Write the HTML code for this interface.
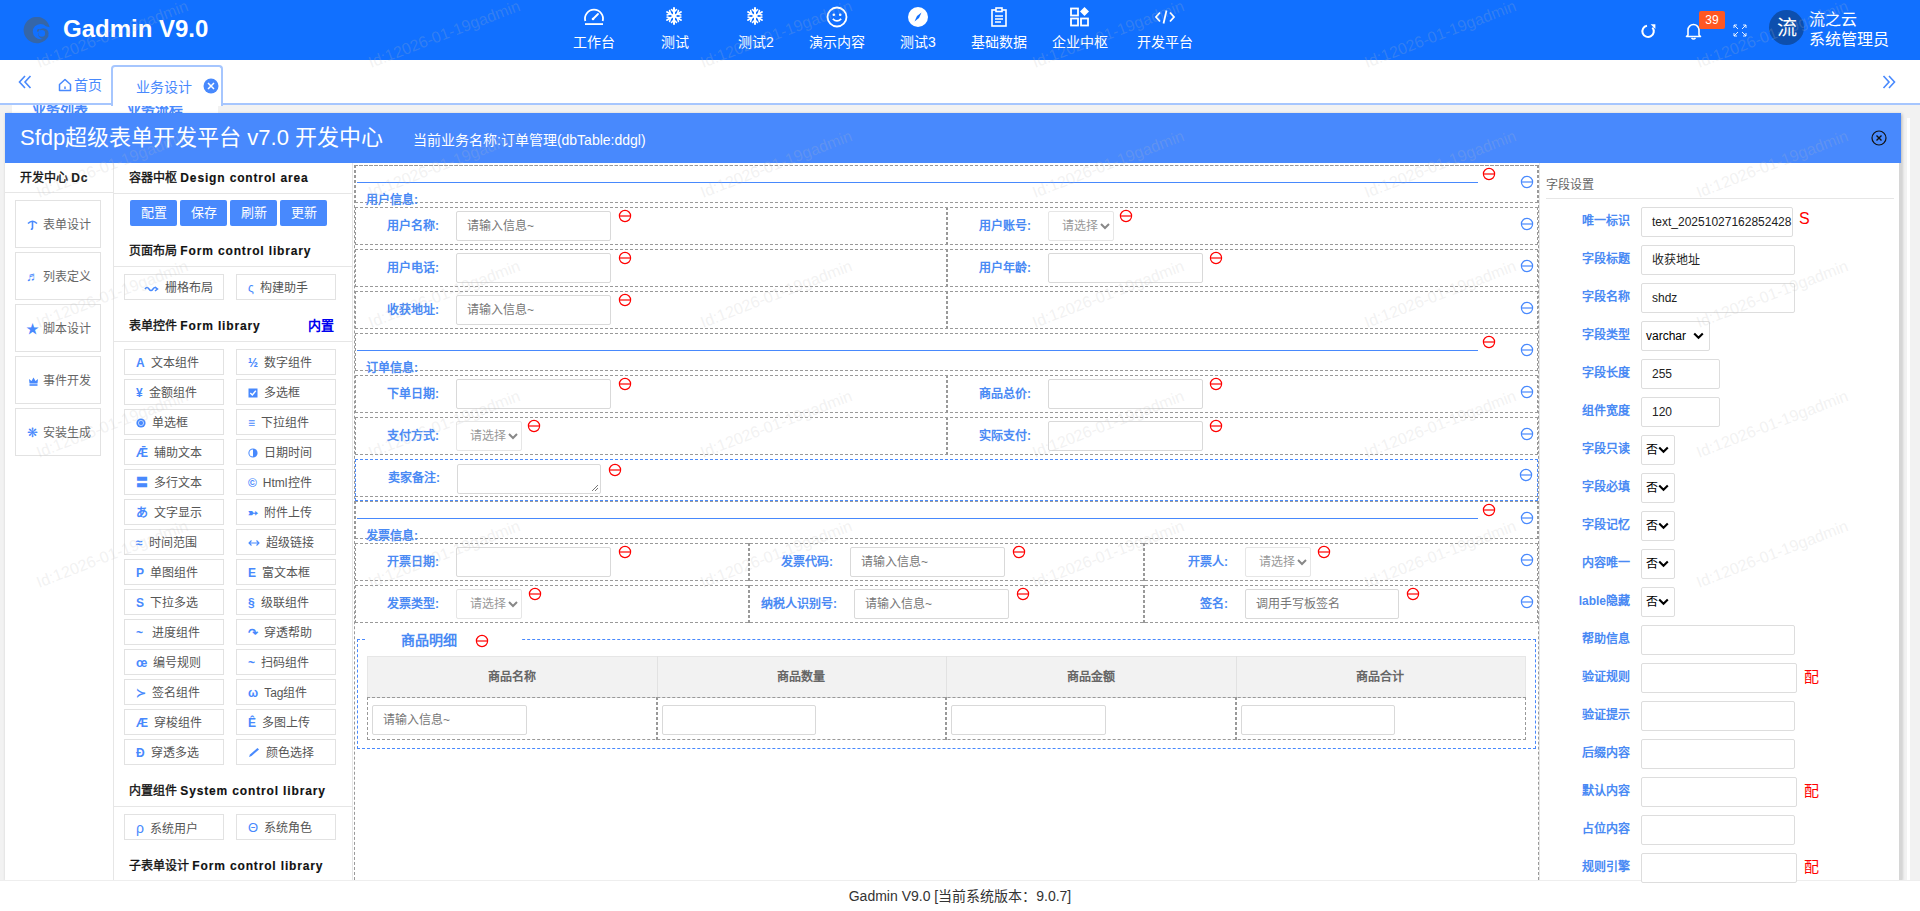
<!DOCTYPE html><html lang="zh-CN"><head><meta charset="utf-8"><title>Gadmin</title><style>
*{margin:0;padding:0;box-sizing:border-box}
html,body{width:1920px;height:911px;overflow:hidden}
body{position:relative;font-family:"Liberation Sans",sans-serif;background:#f2f2f2;color:#333}
.a{position:absolute}
.nw{white-space:nowrap}
.hdr{left:0;top:0;width:1920px;height:60px;background:#1170ff}
.nav{color:#fff;font-size:14px;text-align:center;width:80px}
.tabbar{left:0;top:60px;width:1920px;height:45px;background:#fff;border-bottom:2px solid #a6c6fe}
.modal{left:5px;top:113px;width:1896px;height:767px;background:#fff;box-shadow:1px 1px 3px rgba(0,0,0,.25)}
.mh{left:0;top:0;width:1896px;height:50px;background:#4889fd}
.foot{left:0;top:880px;width:1920px;height:31px;background:#fff;border-top:1px solid #eee}
.bx{border:1px solid #e2e2e2;background:#fff}
.ttl{font-size:12px;color:#111;-webkit-text-stroke:0.35px #111}
.en{font-weight:bold;letter-spacing:0.85px;-webkit-text-stroke:0.15px #111}
.btn{background:#4889fd;color:#fff;font-size:13px;text-align:center;border-radius:2px;line-height:26px;height:26px;width:47px}
.it{font-size:12px;color:#555;height:26px;line-height:26px;width:100px}
.ic{color:#4889fd;display:inline-block;text-align:center}
.dh{border:1px dashed #999}
.lb{font-size:12px;font-weight:bold;color:#4a8af4;text-align:right}
.inp{border:1px solid #d9d9d9;border-radius:2px;background:#fff;font-size:12px;color:#777;padding-left:10px;line-height:28px}
.sel{border:1px solid #e6e6e6;border-radius:2px;background:#fff;font-size:12px;color:#999;padding-left:13px;line-height:28px}
.rm{width:13px;height:13px}
.rl{font-size:12px;font-weight:bold;color:#4a8af4;text-align:right;width:80px}
.ri{border:1px solid #ddd;border-radius:2px;background:#fff;font-size:12px;color:#222;padding-left:10px;line-height:28px;height:30px}
.rs{border:1px solid #ddd;border-radius:2px;background:#fff;font-size:12px;color:#000;padding-left:4px;line-height:28px;height:30px}
</style></head><body>
<div class="a hdr"></div>
<svg class="a" style="left:22px;top:17px" width="30" height="30" viewBox="0 0 30 30"><path d="M27.7 10.2 A13.2 13.2 0 1 0 26.8 18.6 L24.4 19.55 A7.7 7.7 0 1 1 23.94 9.16 Z" fill="#3566a8"/><path fill-rule="evenodd" d="M26.6 16.6 A5.3 5.3 0 1 0 16 16.6 A5.3 5.3 0 1 0 26.6 16.6 Z M23.1 16.4 A3.3 3.3 0 1 0 16.5 16.4 A3.3 3.3 0 1 0 23.1 16.4 Z" fill="#3566a8"/><circle cx="16.6" cy="13.6" r="1.6" fill="#3566a8"/><path d="M16 16.6 A5.3 5.3 0 0 1 17.5 12.8 L19.5 14.5z" fill="#1170ff"/></svg>
<div class="a nw" style="left:63px;top:15px;font-size:24px;font-weight:bold;color:#fff;line-height:28px">Gadmin V9.0</div>
<div class="a" style="left:583px;top:6px;width:22px;height:22px;line-height:0"><svg width="22" height="20" viewBox="0 0 22 20"><path d="M2.3 15 A9 9 0 1 1 19.7 15" fill="none" stroke="#fff" stroke-width="1.8"/><rect x="2" y="17.2" width="18" height="1.8" fill="#fff"/><path d="M10 13 L15 8" stroke="#fff" stroke-width="1.8" stroke-linecap="round"/><circle cx="10" cy="13" r="1.3" fill="#fff"/></svg></div>
<div class="a nav nw" style="left:554px;top:33px;line-height:18px">工作台</div>
<div class="a" style="left:664px;top:6px;width:22px;height:22px;line-height:0"><svg width="20" height="20" viewBox="0 0 20 20"><g stroke="#fff" stroke-width="2" fill="none" stroke-linecap="round"><g transform="rotate(0 10 10)"><path d="M10 2 V18"/><path d="M7.5 3.5 L10 6 L12.5 3.5 M7.5 16.5 L10 14 L12.5 16.5" stroke-width="1.6"/></g><g transform="rotate(60 10 10)"><path d="M10 2 V18"/><path d="M7.5 3.5 L10 6 L12.5 3.5 M7.5 16.5 L10 14 L12.5 16.5" stroke-width="1.6"/></g><g transform="rotate(120 10 10)"><path d="M10 2 V18"/><path d="M7.5 3.5 L10 6 L12.5 3.5 M7.5 16.5 L10 14 L12.5 16.5" stroke-width="1.6"/></g></g></svg></div>
<div class="a nav nw" style="left:635px;top:33px;line-height:18px">测试</div>
<div class="a" style="left:745px;top:6px;width:22px;height:22px;line-height:0"><svg width="20" height="20" viewBox="0 0 20 20"><g stroke="#fff" stroke-width="2" fill="none" stroke-linecap="round"><g transform="rotate(0 10 10)"><path d="M10 2 V18"/><path d="M7.5 3.5 L10 6 L12.5 3.5 M7.5 16.5 L10 14 L12.5 16.5" stroke-width="1.6"/></g><g transform="rotate(60 10 10)"><path d="M10 2 V18"/><path d="M7.5 3.5 L10 6 L12.5 3.5 M7.5 16.5 L10 14 L12.5 16.5" stroke-width="1.6"/></g><g transform="rotate(120 10 10)"><path d="M10 2 V18"/><path d="M7.5 3.5 L10 6 L12.5 3.5 M7.5 16.5 L10 14 L12.5 16.5" stroke-width="1.6"/></g></g></svg></div>
<div class="a nav nw" style="left:716px;top:33px;line-height:18px">测试2</div>
<div class="a" style="left:826px;top:6px;width:22px;height:22px;line-height:0"><svg width="22" height="22" viewBox="0 0 22 22"><circle cx="11" cy="11" r="9.5" fill="none" stroke="#fff" stroke-width="1.8"/><circle cx="7.8" cy="8.8" r="1.3" fill="#fff"/><circle cx="14.2" cy="8.8" r="1.3" fill="#fff"/><path d="M6.8 12.8 Q11 17 15.2 12.8" fill="none" stroke="#fff" stroke-width="1.7"/></svg></div>
<div class="a nav nw" style="left:797px;top:33px;line-height:18px">演示内容</div>
<div class="a" style="left:907px;top:6px;width:22px;height:22px;line-height:0"><svg width="22" height="22" viewBox="0 0 22 22"><circle cx="11" cy="11" r="10" fill="#fff"/><path d="M14.5 6.5 L12 12 L7.5 15.5 L10 10z" fill="#1170ff"/></svg></div>
<div class="a nav nw" style="left:878px;top:33px;line-height:18px">测试3</div>
<div class="a" style="left:988px;top:6px;width:22px;height:22px;line-height:0"><svg width="22" height="22" viewBox="0 0 22 22"><g fill="none" stroke="#fff" stroke-width="1.6"><rect x="4" y="4" width="14" height="16"/><rect x="8" y="2" width="6" height="3.5" fill="#1170ff"/><path d="M7 10 H15 M7 13 H15 M7 16 H13"/></g></svg></div>
<div class="a nav nw" style="left:959px;top:33px;line-height:18px">基础数据</div>
<div class="a" style="left:1069px;top:6px;width:22px;height:22px;line-height:0"><svg width="22" height="22" viewBox="0 0 22 22"><g fill="none" stroke="#fff" stroke-width="1.8"><rect x="2" y="2.5" width="7" height="7"/><rect x="2" y="12.5" width="7" height="7"/><rect x="12" y="12.5" width="7" height="7"/></g><path d="M15.5 1 L20 5.5 L15.5 10 L11 5.5z" fill="#fff"/></svg></div>
<div class="a nav nw" style="left:1040px;top:33px;line-height:18px">企业中枢</div>
<div class="a" style="left:1154px;top:6px;width:22px;height:22px;line-height:0"><svg width="22" height="22" viewBox="0 0 22 22"><g fill="none" stroke="#fff" stroke-width="1.8"><path d="M6 6.5 L2 11 L6 15.5 M16 6.5 L20 11 L16 15.5 M12.5 4.5 L9.5 17.5"/></g></svg></div>
<div class="a nav nw" style="left:1125px;top:33px;line-height:18px">开发平台</div>
<svg class="a" style="left:1639px;top:21px" width="19" height="19" viewBox="0 0 19 19"><path d="M8 4.7 A5.7 5.7 0 1 0 13.4 6.6" fill="none" stroke="#fff" stroke-width="2"/><path d="M11.6 3.2 H16.4 V8 z" fill="#fff"/></svg>
<svg class="a" style="left:1685px;top:22px" width="17" height="18" viewBox="0 0 17 18"><path d="M3 13 V8 A5.5 5.5 0 0 1 14 8 V13 L15.5 14.5 H1.5z" fill="none" stroke="#fff" stroke-width="1.6" stroke-linejoin="round"/><path d="M6.5 16 Q8.5 18 10.5 16" fill="none" stroke="#fff" stroke-width="1.6"/></svg>
<div class="a nw" style="left:1699px;top:11px;width:26px;height:18px;background:#ff5722;border-radius:2px;color:#fff;font-size:12px;text-align:center;line-height:18px">39</div>
<svg class="a" style="left:1733px;top:24px" width="14" height="13" viewBox="0 0 14 13"><g fill="none" stroke="#fff" stroke-width="0.9"><path d="M1 4 V1 H4 M1 1 L5 5 M13 4 V1 H10 M13 1 L9 5 M1 9 V12 H4 M1 12 L5 8 M13 9 V12 H10 M13 12 L9 8"/></g></svg>
<div class="a" style="left:1769px;top:10px;width:35px;height:35px;border-radius:50%;background:#0d4fae;color:#fff;font-size:20px;text-align:center;line-height:37px">流</div>
<div class="a nw" style="left:1809px;top:10px;font-size:16px;color:#fff;line-height:19px">流之云</div>
<div class="a nw" style="left:1809px;top:30px;font-size:16px;color:#fff;line-height:19px">系统管理员</div>
<div class="a" style="left:12px;top:104px;width:206px;height:9px;background:#fff;overflow:hidden"><div class="a nw" style="left:20px;top:-4px;font-size:14px;font-weight:bold;color:#4889fd;line-height:18px">业务列表</div><div class="a nw" style="left:115px;top:-4px;font-size:14px;font-weight:bold;color:#4889fd;line-height:18px">业务流程</div></div>
<div class="a tabbar"></div>
<svg class="a" style="left:18px;top:75px" width="14" height="14" viewBox="0 0 14 14"><path d="M7 1 L1.5 7 L7 13 M12.5 1 L7 7 L12.5 13" fill="none" stroke="#4889fd" stroke-width="1.6"/></svg>
<svg class="a" style="left:58px;top:78px" width="14" height="14" viewBox="0 0 14 14"><path d="M1.5 6.5 L7 1.5 L12.5 6.5 V12.5 H1.5z" fill="none" stroke="#4889fd" stroke-width="1.5" stroke-linejoin="round"/><path d="M7 8.5 V11" stroke="#4889fd" stroke-width="1.5"/></svg>
<div class="a nw" style="left:74px;top:76px;font-size:14px;color:#4889fd;line-height:18px">首页</div>
<div class="a" style="left:111px;top:65px;width:112px;height:41px;background:#fff;border:2px solid #a6c6fe;border-bottom:none;border-radius:4px 4px 0 0"></div>
<div class="a nw" style="left:136px;top:78px;font-size:14px;color:#4889fd;line-height:18px">业务设计</div>
<svg class="a" style="left:203px;top:78px" width="16" height="16" viewBox="0 0 16 16"><circle cx="8" cy="8" r="7.5" fill="#4889fd"/><path d="M5 5 L11 11 M11 5 L5 11" stroke="#fff" stroke-width="1.5"/></svg>
<svg class="a" style="left:1882px;top:75px" width="14" height="14" viewBox="0 0 14 14"><path d="M1.5 1 L7 7 L1.5 13 M7 1 L12.5 7 L7 13" fill="none" stroke="#4889fd" stroke-width="1.6"/></svg>
<div class="a" style="left:1907px;top:118px;width:3px;height:762px;background:#fff"></div>
<div class="a modal">
<div class="a mh"></div>
<div class="a nw" style="left:15px;top:12px;font-size:22px;color:#fff;line-height:26px">Sfdp超级表单开发平台 v7.0 开发中心</div>
<div class="a nw" style="left:408px;top:18px;font-size:14px;color:#fff;line-height:18px;">当前业务名称:订单管理(dbTable:ddgl)</div>
<svg class="a" style="left:1866px;top:17px" width="16" height="16" viewBox="0 0 16 16"><circle cx="8" cy="8" r="7" fill="none" stroke="#111" stroke-width="1.2"/><path d="M5.5 5.5 L10.5 10.5 M10.5 5.5 L5.5 10.5" stroke="#111" stroke-width="1.4"/></svg>
</div>
<div class="a foot"></div>
<div class="a nw" style="left:0;top:887px;width:1920px;text-align:center;font-size:14px;color:#333;line-height:18px">Gadmin V9.0 [当前系统版本：9.0.7]</div>
<div class="a" style="left:113px;top:163px;width:1px;height:717px;background:#e6e6e6"></div>
<div class="a" style="left:5px;top:192px;width:108px;height:1px;background:#e6e6e6"></div>
<div class="a" style="left:113px;top:193px;width:240px;height:1px;background:#e6e6e6"></div>
<div class="a nw ttl" style="left:20px;top:170px;line-height:16px">开发中心 <span class="en">Dc</span></div>
<div class="a bx nw" style="left:15px;top:200px;width:86px;height:48px;font-size:12px;color:#666;line-height:48px;padding-left:10px"><span class="ic" style="width:13px;font-size:13px;margin-right:4px"><svg width="11" height="11" viewBox="0 0 11 11" style="vertical-align:-1px"><path d="M1 4.5 Q5.5 0 10 4.5" fill="none" stroke="#4889fd" stroke-width="1.6"/><path d="M5.5 2 V9 Q5.5 10.5 3.8 10" fill="none" stroke="#4889fd" stroke-width="1.6"/></svg></span>表单设计</div>
<div class="a bx nw" style="left:15px;top:252px;width:86px;height:48px;font-size:12px;color:#666;line-height:48px;padding-left:10px"><span class="ic" style="width:13px;font-size:13px;margin-right:4px">♬</span>列表定义</div>
<div class="a bx nw" style="left:15px;top:304px;width:86px;height:48px;font-size:12px;color:#666;line-height:48px;padding-left:10px"><span class="ic" style="width:13px;font-size:13px;margin-right:4px">★</span>脚本设计</div>
<div class="a bx nw" style="left:15px;top:356px;width:86px;height:48px;font-size:12px;color:#666;line-height:48px;padding-left:10px"><span class="ic" style="width:13px;font-size:13px;margin-right:4px"><svg width="11" height="10" viewBox="0 0 11 10" style="vertical-align:-1px;margin-left:2px"><path d="M1 3 L3.5 5 L5.5 1.5 L7.5 5 L10 3 L9.5 7.5 H1.5z" fill="#4889fd"/><rect x="1.5" y="8.2" width="8" height="1.6" fill="#4889fd"/></svg></span>事件开发</div>
<div class="a bx nw" style="left:15px;top:408px;width:86px;height:48px;font-size:12px;color:#666;line-height:48px;padding-left:10px"><span class="ic" style="width:13px;font-size:13px;margin-right:4px">❋</span>安装生成</div>
<div class="a" style="left:352px;top:163px;width:1px;height:717px;background:#e6e6e6"></div>
<div class="a nw ttl" style="left:129px;top:170px;line-height:16px">容器中枢 <span class="en">Design control area</span></div>
<div class="a btn nw" style="left:130px;top:200px">配置</div>
<div class="a btn nw" style="left:180px;top:200px">保存</div>
<div class="a btn nw" style="left:230px;top:200px">刷新</div>
<div class="a btn nw" style="left:280px;top:200px">更新</div>
<div class="a nw ttl" style="left:129px;top:243px;line-height:16px">页面布局 <span class="en">Form control library</span></div>
<div class="a" style="left:113px;top:266px;width:240px;height:1px;background:#e6e6e6"></div>
<div class="a bx it nw" style="left:124px;top:274px;padding-left:11px"><span class="ic" style="margin-right:6px;"><svg width="15" height="8" viewBox="0 0 15 8" style="vertical-align:-1px;margin-left:8px"><path d="M1 4 Q3 1 5 4 T9 4 T13 4 M11 2 L13.5 4 L11 6" fill="none" stroke="#4889fd" stroke-width="1.5"/></svg></span>栅格布局</div>
<div class="a bx it nw" style="left:236px;top:274px;padding-left:11px"><span class="ic" style="margin-right:6px;">ς</span>构建助手</div>
<div class="a nw ttl" style="left:129px;top:318px;line-height:16px">表单控件 <span class="en">Form library</span></div>
<div class="a nw" style="left:308px;top:318px;line-height:16px;font-size:13px;font-weight:bold;color:#0000ee">内置</div>
<div class="a" style="left:113px;top:341px;width:240px;height:1px;background:#e6e6e6"></div>
<div class="a bx it nw" style="left:124px;top:349px;padding-left:11px"><span class="ic" style="margin-right:6px;font-size:12px;font-weight:bold">A</span>文本组件</div>
<div class="a bx it nw" style="left:236px;top:349px;padding-left:11px"><span class="ic" style="margin-right:6px;font-size:12px;font-weight:bold">½</span>数字组件</div>
<div class="a bx it nw" style="left:124px;top:379px;padding-left:11px"><span class="ic" style="margin-right:6px;font-size:12px;font-weight:bold">¥</span>金额组件</div>
<div class="a bx it nw" style="left:236px;top:379px;padding-left:11px"><span class="ic" style="margin-right:6px;font-size:12px;font-weight:bold"><svg width="10" height="10" viewBox="0 0 10 10" style="vertical-align:-1px"><rect x="0.5" y="0.5" width="9" height="9" fill="#4889fd"/><path d="M2.3 5 L4.3 7 L7.8 2.8" fill="none" stroke="#fff" stroke-width="1.4"/></svg></span>多选框</div>
<div class="a bx it nw" style="left:124px;top:409px;padding-left:11px"><span class="ic" style="margin-right:6px;font-size:12px;font-weight:bold"><svg width="10" height="10" viewBox="0 0 10 10" style="vertical-align:-1px"><circle cx="5" cy="5" r="4.6" fill="#4889fd"/><circle cx="5" cy="5" r="2.6" fill="none" stroke="#c9dcff" stroke-width="0.9"/></svg></span>单选框</div>
<div class="a bx it nw" style="left:236px;top:409px;padding-left:11px"><span class="ic" style="margin-right:6px;font-size:12px;font-weight:bold">≡</span>下拉组件</div>
<div class="a bx it nw" style="left:124px;top:439px;padding-left:11px"><span class="ic" style="margin-right:6px;font-size:12px;font-weight:bold">Ǣ</span>辅助文本</div>
<div class="a bx it nw" style="left:236px;top:439px;padding-left:11px"><span class="ic" style="margin-right:6px;font-size:12px;font-weight:bold"><svg width="10" height="10" viewBox="0 0 10 10" style="vertical-align:-1px"><circle cx="5" cy="5" r="4.6" fill="#4889fd"/><path d="M5 1.4 A3.6 3.6 0 0 0 5 8.6z" fill="#fff"/></svg></span>日期时间</div>
<div class="a bx it nw" style="left:124px;top:469px;padding-left:11px"><span class="ic" style="margin-right:6px;font-size:12px;font-weight:bold">〓</span>多行文本</div>
<div class="a bx it nw" style="left:236px;top:469px;padding-left:11px"><span class="ic" style="margin-right:6px;font-size:12px;font-weight:bold">©</span>Html控件</div>
<div class="a bx it nw" style="left:124px;top:499px;padding-left:11px"><span class="ic" style="margin-right:6px;font-size:12px;font-weight:bold">あ</span>文字显示</div>
<div class="a bx it nw" style="left:236px;top:499px;padding-left:11px"><span class="ic" style="margin-right:6px;font-size:12px;font-weight:bold">➳</span>附件上传</div>
<div class="a bx it nw" style="left:124px;top:529px;padding-left:11px"><span class="ic" style="margin-right:6px;font-size:12px;font-weight:bold">≈</span>时间范围</div>
<div class="a bx it nw" style="left:236px;top:529px;padding-left:11px"><span class="ic" style="margin-right:6px;font-size:12px;font-weight:bold"><svg width="12" height="8" viewBox="0 0 12 8" style="vertical-align:0px"><path d="M1 4 H11 M3.5 1.5 L1 4 L3.5 6.5 M8.5 1.5 L11 4 L8.5 6.5" fill="none" stroke="#4889fd" stroke-width="1.1"/></svg></span>超级链接</div>
<div class="a bx it nw" style="left:124px;top:559px;padding-left:11px"><span class="ic" style="margin-right:6px;font-size:12px;font-weight:bold">P</span>单图组件</div>
<div class="a bx it nw" style="left:236px;top:559px;padding-left:11px"><span class="ic" style="margin-right:6px;font-size:12px;font-weight:bold">E</span>富文本框</div>
<div class="a bx it nw" style="left:124px;top:589px;padding-left:11px"><span class="ic" style="margin-right:6px;font-size:12px;font-weight:bold">S</span>下拉多选</div>
<div class="a bx it nw" style="left:236px;top:589px;padding-left:11px"><span class="ic" style="margin-right:6px;font-size:12px;font-weight:bold">§</span>级联组件</div>
<div class="a bx it nw" style="left:124px;top:619px;padding-left:11px"><span class="ic" style="margin-right:6px;font-size:12px;font-weight:bold">~&nbsp;</span>进度组件</div>
<div class="a bx it nw" style="left:236px;top:619px;padding-left:11px"><span class="ic" style="margin-right:6px;font-size:12px;font-weight:bold">↷</span>穿透帮助</div>
<div class="a bx it nw" style="left:124px;top:649px;padding-left:11px"><span class="ic" style="margin-right:6px;font-size:12px;font-weight:bold">œ</span>编号规则</div>
<div class="a bx it nw" style="left:236px;top:649px;padding-left:11px"><span class="ic" style="margin-right:6px;font-size:12px;font-weight:bold">~</span>扫码组件</div>
<div class="a bx it nw" style="left:124px;top:679px;padding-left:11px"><span class="ic" style="margin-right:6px;font-size:12px;font-weight:bold">≻</span>签名组件</div>
<div class="a bx it nw" style="left:236px;top:679px;padding-left:11px"><span class="ic" style="margin-right:6px;font-size:12px;font-weight:bold">ω</span>Tag组件</div>
<div class="a bx it nw" style="left:124px;top:709px;padding-left:11px"><span class="ic" style="margin-right:6px;font-size:12px;font-weight:bold">Æ</span>穿梭组件</div>
<div class="a bx it nw" style="left:236px;top:709px;padding-left:11px"><span class="ic" style="margin-right:6px;font-size:12px;font-weight:bold">Ê</span>多图上传</div>
<div class="a bx it nw" style="left:124px;top:739px;padding-left:11px"><span class="ic" style="margin-right:6px;font-size:12px;font-weight:bold">Đ</span>穿透多选</div>
<div class="a bx it nw" style="left:236px;top:739px;padding-left:11px"><span class="ic" style="margin-right:6px;font-size:12px;font-weight:bold"><svg width="12" height="11" viewBox="0 0 12 11" style="vertical-align:-1px"><path d="M1 10 L2 7.5 L9.5 1 L11 2.5 L3.5 9z" fill="#4889fd"/></svg></span>颜色选择</div>
<div class="a nw ttl" style="left:129px;top:783px;line-height:16px">内置组件 <span class="en">System control library</span></div>
<div class="a" style="left:113px;top:806px;width:240px;height:1px;background:#e6e6e6"></div>
<div class="a bx it nw" style="left:124px;top:814px;padding-left:11px"><span class="ic" style="margin-right:6px;font-size:14px">ρ</span>系统用户</div>
<div class="a bx it nw" style="left:236px;top:814px;padding-left:11px"><span class="ic" style="margin-right:6px;font-size:13px">Θ</span>系统角色</div>
<div class="a nw ttl" style="left:129px;top:858px;line-height:16px">子表单设计 <span class="en">Form control library</span></div>
<div class="a" style="left:354px;top:165px;width:1185px;height:715px;border:1px dashed #999;border-bottom:none"></div>
<div class="a" style="left:355px;top:165px;width:1183px;height:38px;border:1px dashed #999"></div>
<div class="a" style="left:357px;top:182px;width:1121px;height:1px;background:#4889fd"></div>
<div class="a nw lb" style="left:366px;top:192px;line-height:16px;text-align:left">用户信息:</div>
<svg class="a" style="left:1482px;top:167px" width="14" height="14" viewBox="0 0 14 14"><circle cx="7" cy="7" r="5.6" fill="none" stroke="#f00" stroke-width="1.2"/><path d="M1.8 7 H12.2" stroke="#f00" stroke-width="1.2"/></svg>
<svg class="a" style="left:1520px;top:175px" width="14" height="14" viewBox="0 0 14 14"><circle cx="7" cy="7" r="5.6" fill="none" stroke="#4889fd" stroke-width="1.2"/><path d="M1.8 7 H12.2" stroke="#4889fd" stroke-width="1.2"/></svg>
<div class="a" style="left:355px;top:207px;width:1183px;height:38px;border:1px dashed #999"></div>
<div class="a" style="left:946px;top:207px;width:2px;height:38px;border-left:1px dashed #999;border-right:1px dashed #999"></div>
<div class="a nw lb" style="left:319px;top:218px;width:120px;line-height:16px">用户名称:</div>
<div class="a inp nw" style="left:456px;top:211px;width:155px;height:30px">请输入信息~</div>
<svg class="a" style="left:618px;top:209px" width="14" height="14" viewBox="0 0 14 14"><circle cx="7" cy="7" r="5.6" fill="none" stroke="#f00" stroke-width="1.2"/><path d="M1.8 7 H12.2" stroke="#f00" stroke-width="1.2"/></svg>
<div class="a nw lb" style="left:911px;top:218px;width:120px;line-height:16px">用户账号:</div>
<div class="a sel nw" style="left:1048px;top:211px;width:66px;height:30px">请选择<svg class="a" style="right:3px;top:10px" width="10" height="8" viewBox="0 0 10 8"><path d="M1 2 L5 6 L9 2" fill="none" stroke="#888" stroke-width="2"/></svg></div>
<svg class="a" style="left:1119px;top:209px" width="14" height="14" viewBox="0 0 14 14"><circle cx="7" cy="7" r="5.6" fill="none" stroke="#f00" stroke-width="1.2"/><path d="M1.8 7 H12.2" stroke="#f00" stroke-width="1.2"/></svg>
<svg class="a" style="left:1520px;top:217px" width="14" height="14" viewBox="0 0 14 14"><circle cx="7" cy="7" r="5.6" fill="none" stroke="#4889fd" stroke-width="1.2"/><path d="M1.8 7 H12.2" stroke="#4889fd" stroke-width="1.2"/></svg>
<div class="a" style="left:355px;top:249px;width:1183px;height:38px;border:1px dashed #999"></div>
<div class="a" style="left:946px;top:249px;width:2px;height:38px;border-left:1px dashed #999;border-right:1px dashed #999"></div>
<div class="a nw lb" style="left:319px;top:260px;width:120px;line-height:16px">用户电话:</div>
<div class="a inp nw" style="left:456px;top:253px;width:155px;height:30px"></div>
<svg class="a" style="left:618px;top:251px" width="14" height="14" viewBox="0 0 14 14"><circle cx="7" cy="7" r="5.6" fill="none" stroke="#f00" stroke-width="1.2"/><path d="M1.8 7 H12.2" stroke="#f00" stroke-width="1.2"/></svg>
<div class="a nw lb" style="left:911px;top:260px;width:120px;line-height:16px">用户年龄:</div>
<div class="a inp nw" style="left:1048px;top:253px;width:155px;height:30px"></div>
<svg class="a" style="left:1209px;top:251px" width="14" height="14" viewBox="0 0 14 14"><circle cx="7" cy="7" r="5.6" fill="none" stroke="#f00" stroke-width="1.2"/><path d="M1.8 7 H12.2" stroke="#f00" stroke-width="1.2"/></svg>
<svg class="a" style="left:1520px;top:259px" width="14" height="14" viewBox="0 0 14 14"><circle cx="7" cy="7" r="5.6" fill="none" stroke="#4889fd" stroke-width="1.2"/><path d="M1.8 7 H12.2" stroke="#4889fd" stroke-width="1.2"/></svg>
<div class="a" style="left:355px;top:291px;width:1183px;height:38px;border:1px dashed #999"></div>
<div class="a" style="left:946px;top:291px;width:2px;height:38px;border-left:1px dashed #999;border-right:1px dashed #999"></div>
<div class="a nw lb" style="left:319px;top:302px;width:120px;line-height:16px">收获地址:</div>
<div class="a inp nw" style="left:456px;top:295px;width:155px;height:30px">请输入信息~</div>
<svg class="a" style="left:618px;top:293px" width="14" height="14" viewBox="0 0 14 14"><circle cx="7" cy="7" r="5.6" fill="none" stroke="#f00" stroke-width="1.2"/><path d="M1.8 7 H12.2" stroke="#f00" stroke-width="1.2"/></svg>
<svg class="a" style="left:1520px;top:301px" width="14" height="14" viewBox="0 0 14 14"><circle cx="7" cy="7" r="5.6" fill="none" stroke="#4889fd" stroke-width="1.2"/><path d="M1.8 7 H12.2" stroke="#4889fd" stroke-width="1.2"/></svg>
<div class="a" style="left:355px;top:333px;width:1183px;height:38px;border:1px dashed #999"></div>
<div class="a" style="left:357px;top:350px;width:1121px;height:1px;background:#4889fd"></div>
<div class="a nw lb" style="left:366px;top:360px;line-height:16px;text-align:left">订单信息:</div>
<svg class="a" style="left:1482px;top:335px" width="14" height="14" viewBox="0 0 14 14"><circle cx="7" cy="7" r="5.6" fill="none" stroke="#f00" stroke-width="1.2"/><path d="M1.8 7 H12.2" stroke="#f00" stroke-width="1.2"/></svg>
<svg class="a" style="left:1520px;top:343px" width="14" height="14" viewBox="0 0 14 14"><circle cx="7" cy="7" r="5.6" fill="none" stroke="#4889fd" stroke-width="1.2"/><path d="M1.8 7 H12.2" stroke="#4889fd" stroke-width="1.2"/></svg>
<div class="a" style="left:355px;top:375px;width:1183px;height:38px;border:1px dashed #999"></div>
<div class="a" style="left:946px;top:375px;width:2px;height:38px;border-left:1px dashed #999;border-right:1px dashed #999"></div>
<div class="a nw lb" style="left:319px;top:386px;width:120px;line-height:16px">下单日期:</div>
<div class="a inp nw" style="left:456px;top:379px;width:155px;height:30px"></div>
<svg class="a" style="left:618px;top:377px" width="14" height="14" viewBox="0 0 14 14"><circle cx="7" cy="7" r="5.6" fill="none" stroke="#f00" stroke-width="1.2"/><path d="M1.8 7 H12.2" stroke="#f00" stroke-width="1.2"/></svg>
<div class="a nw lb" style="left:911px;top:386px;width:120px;line-height:16px">商品总价:</div>
<div class="a inp nw" style="left:1048px;top:379px;width:155px;height:30px"></div>
<svg class="a" style="left:1209px;top:377px" width="14" height="14" viewBox="0 0 14 14"><circle cx="7" cy="7" r="5.6" fill="none" stroke="#f00" stroke-width="1.2"/><path d="M1.8 7 H12.2" stroke="#f00" stroke-width="1.2"/></svg>
<svg class="a" style="left:1520px;top:385px" width="14" height="14" viewBox="0 0 14 14"><circle cx="7" cy="7" r="5.6" fill="none" stroke="#4889fd" stroke-width="1.2"/><path d="M1.8 7 H12.2" stroke="#4889fd" stroke-width="1.2"/></svg>
<div class="a" style="left:355px;top:417px;width:1183px;height:38px;border:1px dashed #999"></div>
<div class="a" style="left:946px;top:417px;width:2px;height:38px;border-left:1px dashed #999;border-right:1px dashed #999"></div>
<div class="a nw lb" style="left:319px;top:428px;width:120px;line-height:16px">支付方式:</div>
<div class="a sel nw" style="left:456px;top:421px;width:66px;height:30px">请选择<svg class="a" style="right:3px;top:10px" width="10" height="8" viewBox="0 0 10 8"><path d="M1 2 L5 6 L9 2" fill="none" stroke="#888" stroke-width="2"/></svg></div>
<svg class="a" style="left:527px;top:419px" width="14" height="14" viewBox="0 0 14 14"><circle cx="7" cy="7" r="5.6" fill="none" stroke="#f00" stroke-width="1.2"/><path d="M1.8 7 H12.2" stroke="#f00" stroke-width="1.2"/></svg>
<div class="a nw lb" style="left:911px;top:428px;width:120px;line-height:16px">实际支付:</div>
<div class="a inp nw" style="left:1048px;top:421px;width:155px;height:30px"></div>
<svg class="a" style="left:1209px;top:419px" width="14" height="14" viewBox="0 0 14 14"><circle cx="7" cy="7" r="5.6" fill="none" stroke="#f00" stroke-width="1.2"/><path d="M1.8 7 H12.2" stroke="#f00" stroke-width="1.2"/></svg>
<svg class="a" style="left:1520px;top:427px" width="14" height="14" viewBox="0 0 14 14"><circle cx="7" cy="7" r="5.6" fill="none" stroke="#4889fd" stroke-width="1.2"/><path d="M1.8 7 H12.2" stroke="#4889fd" stroke-width="1.2"/></svg>
<div class="a" style="left:355px;top:459px;width:1183px;height:38px;border:1px dashed #999"></div>
<div class="a" style="left:355px;top:459px;width:1183px;height:42px;border:1px dashed #4889fd"></div>
<div class="a nw lb" style="left:320px;top:470px;width:120px;line-height:16px">卖家备注:</div>
<div class="a" style="left:457px;top:464px;width:144px;height:30px;border:1px solid #d9d9d9;border-radius:2px;background:#fff"><svg class="a" style="right:1px;bottom:1px" width="9" height="9" viewBox="0 0 9 9"><path d="M8 2 L2 8 M8 5 L5 8" stroke="#777" stroke-width="1"/></svg></div>
<svg class="a" style="left:608px;top:463px" width="14" height="14" viewBox="0 0 14 14"><circle cx="7" cy="7" r="5.6" fill="none" stroke="#f00" stroke-width="1.2"/><path d="M1.8 7 H12.2" stroke="#f00" stroke-width="1.2"/></svg>
<svg class="a" style="left:1519px;top:468px" width="14" height="14" viewBox="0 0 14 14"><circle cx="7" cy="7" r="5.6" fill="none" stroke="#4889fd" stroke-width="1.2"/><path d="M1.8 7 H12.2" stroke="#4889fd" stroke-width="1.2"/></svg>
<div class="a" style="left:355px;top:501px;width:1183px;height:38px;border:1px dashed #999"></div>
<div class="a" style="left:357px;top:518px;width:1121px;height:1px;background:#4889fd"></div>
<div class="a nw lb" style="left:366px;top:528px;line-height:16px;text-align:left">发票信息:</div>
<svg class="a" style="left:1482px;top:503px" width="14" height="14" viewBox="0 0 14 14"><circle cx="7" cy="7" r="5.6" fill="none" stroke="#f00" stroke-width="1.2"/><path d="M1.8 7 H12.2" stroke="#f00" stroke-width="1.2"/></svg>
<svg class="a" style="left:1520px;top:511px" width="14" height="14" viewBox="0 0 14 14"><circle cx="7" cy="7" r="5.6" fill="none" stroke="#4889fd" stroke-width="1.2"/><path d="M1.8 7 H12.2" stroke="#4889fd" stroke-width="1.2"/></svg>
<div class="a" style="left:355px;top:543px;width:1183px;height:38px;border:1px dashed #999"></div>
<div class="a" style="left:748px;top:543px;width:2px;height:38px;border-left:1px dashed #999;border-right:1px dashed #999"></div>
<div class="a" style="left:1143px;top:543px;width:2px;height:38px;border-left:1px dashed #999;border-right:1px dashed #999"></div>
<div class="a nw lb" style="left:319px;top:554px;width:120px;line-height:16px">开票日期:</div>
<div class="a inp nw" style="left:456px;top:547px;width:155px;height:30px"></div>
<svg class="a" style="left:618px;top:545px" width="14" height="14" viewBox="0 0 14 14"><circle cx="7" cy="7" r="5.6" fill="none" stroke="#f00" stroke-width="1.2"/><path d="M1.8 7 H12.2" stroke="#f00" stroke-width="1.2"/></svg>
<div class="a nw lb" style="left:713px;top:554px;width:120px;line-height:16px">发票代码:</div>
<div class="a inp nw" style="left:850px;top:547px;width:155px;height:30px">请输入信息~</div>
<svg class="a" style="left:1012px;top:545px" width="14" height="14" viewBox="0 0 14 14"><circle cx="7" cy="7" r="5.6" fill="none" stroke="#f00" stroke-width="1.2"/><path d="M1.8 7 H12.2" stroke="#f00" stroke-width="1.2"/></svg>
<div class="a nw lb" style="left:1108px;top:554px;width:120px;line-height:16px">开票人:</div>
<div class="a sel nw" style="left:1245px;top:547px;width:66px;height:30px">请选择<svg class="a" style="right:3px;top:10px" width="10" height="8" viewBox="0 0 10 8"><path d="M1 2 L5 6 L9 2" fill="none" stroke="#888" stroke-width="2"/></svg></div>
<svg class="a" style="left:1317px;top:545px" width="14" height="14" viewBox="0 0 14 14"><circle cx="7" cy="7" r="5.6" fill="none" stroke="#f00" stroke-width="1.2"/><path d="M1.8 7 H12.2" stroke="#f00" stroke-width="1.2"/></svg>
<svg class="a" style="left:1520px;top:553px" width="14" height="14" viewBox="0 0 14 14"><circle cx="7" cy="7" r="5.6" fill="none" stroke="#4889fd" stroke-width="1.2"/><path d="M1.8 7 H12.2" stroke="#4889fd" stroke-width="1.2"/></svg>
<div class="a" style="left:355px;top:585px;width:1183px;height:38px;border:1px dashed #999"></div>
<div class="a" style="left:748px;top:585px;width:2px;height:38px;border-left:1px dashed #999;border-right:1px dashed #999"></div>
<div class="a" style="left:1143px;top:585px;width:2px;height:38px;border-left:1px dashed #999;border-right:1px dashed #999"></div>
<div class="a nw lb" style="left:319px;top:596px;width:120px;line-height:16px">发票类型:</div>
<div class="a sel nw" style="left:456px;top:589px;width:66px;height:30px">请选择<svg class="a" style="right:3px;top:10px" width="10" height="8" viewBox="0 0 10 8"><path d="M1 2 L5 6 L9 2" fill="none" stroke="#888" stroke-width="2"/></svg></div>
<svg class="a" style="left:528px;top:587px" width="14" height="14" viewBox="0 0 14 14"><circle cx="7" cy="7" r="5.6" fill="none" stroke="#f00" stroke-width="1.2"/><path d="M1.8 7 H12.2" stroke="#f00" stroke-width="1.2"/></svg>
<div class="a nw lb" style="left:717px;top:596px;width:120px;line-height:16px">纳税人识别号:</div>
<div class="a inp nw" style="left:854px;top:589px;width:155px;height:30px">请输入信息~</div>
<svg class="a" style="left:1016px;top:587px" width="14" height="14" viewBox="0 0 14 14"><circle cx="7" cy="7" r="5.6" fill="none" stroke="#f00" stroke-width="1.2"/><path d="M1.8 7 H12.2" stroke="#f00" stroke-width="1.2"/></svg>
<div class="a nw lb" style="left:1108px;top:596px;width:120px;line-height:16px">签名:</div>
<div class="a inp nw" style="left:1245px;top:589px;width:154px;height:30px">调用手写板签名</div>
<svg class="a" style="left:1406px;top:587px" width="14" height="14" viewBox="0 0 14 14"><circle cx="7" cy="7" r="5.6" fill="none" stroke="#f00" stroke-width="1.2"/><path d="M1.8 7 H12.2" stroke="#f00" stroke-width="1.2"/></svg>
<svg class="a" style="left:1520px;top:595px" width="14" height="14" viewBox="0 0 14 14"><circle cx="7" cy="7" r="5.6" fill="none" stroke="#4889fd" stroke-width="1.2"/><path d="M1.8 7 H12.2" stroke="#4889fd" stroke-width="1.2"/></svg>
<div class="a" style="left:357px;top:639px;width:1179px;height:110px;border:1px dashed #4889fd"></div>
<div class="a" style="left:365px;top:632px;width:157px;height:14px;background:#fff"></div>
<div class="a nw" style="left:401px;top:631px;font-size:14px;font-weight:bold;color:#4a8af4;line-height:18px">商品明细</div>
<svg class="a" style="left:475px;top:634px" width="14" height="14" viewBox="0 0 14 14"><circle cx="7" cy="7" r="5.6" fill="none" stroke="#f00" stroke-width="1.2"/><path d="M1.8 7 H12.2" stroke="#f00" stroke-width="1.2"/></svg>
<div class="a" style="left:367px;top:656px;width:1159px;height:42px;background:#f2f2f2;border:1px solid #e6e6e6"></div>
<div class="a" style="left:657px;top:656px;width:1px;height:42px;background:#e2e2e2"></div>
<div class="a" style="left:946px;top:656px;width:1px;height:42px;background:#e2e2e2"></div>
<div class="a" style="left:1236px;top:656px;width:1px;height:42px;background:#e2e2e2"></div>
<div class="a nw" style="left:452px;top:669px;width:120px;text-align:center;font-size:12px;font-weight:bold;color:#666;line-height:16px">商品名称</div>
<div class="a nw" style="left:741px;top:669px;width:120px;text-align:center;font-size:12px;font-weight:bold;color:#666;line-height:16px">商品数量</div>
<div class="a nw" style="left:1031px;top:669px;width:120px;text-align:center;font-size:12px;font-weight:bold;color:#666;line-height:16px">商品金额</div>
<div class="a nw" style="left:1320px;top:669px;width:120px;text-align:center;font-size:12px;font-weight:bold;color:#666;line-height:16px">商品合计</div>
<div class="a" style="left:367px;top:697px;width:1159px;height:43px;border:1px dashed #999"></div>
<div class="a" style="left:656px;top:697px;width:2px;height:43px;border-left:1px dashed #999;border-right:1px dashed #999"></div>
<div class="a" style="left:945px;top:697px;width:2px;height:43px;border-left:1px dashed #999;border-right:1px dashed #999"></div>
<div class="a" style="left:1235px;top:697px;width:2px;height:43px;border-left:1px dashed #999;border-right:1px dashed #999"></div>
<div class="a inp nw" style="left:372px;top:705px;width:155px;height:30px">请输入信息~</div>
<div class="a inp nw" style="left:662px;top:705px;width:154px;height:30px"></div>
<div class="a inp nw" style="left:951px;top:705px;width:155px;height:30px"></div>
<div class="a inp nw" style="left:1241px;top:705px;width:154px;height:30px"></div>
<div class="a" style="left:1539px;top:163px;width:1px;height:717px;background:#e6e6e6"></div>
<div class="a" style="left:1899px;top:163px;width:3px;height:717px;background:#d6d6d6"></div>
<div class="a nw" style="left:1546px;top:177px;font-size:12px;color:#666;line-height:16px">字段设置</div>
<div class="a" style="left:1546px;top:198px;width:348px;height:1px;background:#e6e6e6"></div>
<div class="a nw rl" style="left:1550px;top:213px;line-height:16px">唯一标识</div>
<div class="a nw ri" style="left:1641px;top:207px;width:152px">text_20251027162852428</div>
<div class="a nw" style="left:1799px;top:210px;font-size:16px;color:#f00;line-height:18px">S</div>
<div class="a nw rl" style="left:1550px;top:251px;line-height:16px">字段标题</div>
<div class="a nw ri" style="left:1641px;top:245px;width:154px">收获地址</div>
<div class="a nw rl" style="left:1550px;top:289px;line-height:16px">字段名称</div>
<div class="a nw ri" style="left:1641px;top:283px;width:154px">shdz</div>
<div class="a nw rl" style="left:1550px;top:327px;line-height:16px">字段类型</div>
<div class="a nw rs" style="left:1641px;top:321px;width:69px">varchar<svg class="a" style="right:5px;top:10px" width="11" height="8" viewBox="0 0 11 8"><path d="M1.2 1.5 L5.5 5.8 L9.8 1.5" fill="none" stroke="#000" stroke-width="2.1"/></svg></div>
<div class="a nw rl" style="left:1550px;top:365px;line-height:16px">字段长度</div>
<div class="a nw ri" style="left:1641px;top:359px;width:79px">255</div>
<div class="a nw rl" style="left:1550px;top:403px;line-height:16px">组件宽度</div>
<div class="a nw ri" style="left:1641px;top:397px;width:79px">120</div>
<div class="a nw rl" style="left:1550px;top:441px;line-height:16px">字段只读</div>
<div class="a nw rs" style="left:1641px;top:435px;width:34px">否<svg class="a" style="right:5px;top:10px" width="11" height="8" viewBox="0 0 11 8"><path d="M1.2 1.5 L5.5 5.8 L9.8 1.5" fill="none" stroke="#000" stroke-width="2.1"/></svg></div>
<div class="a nw rl" style="left:1550px;top:479px;line-height:16px">字段必填</div>
<div class="a nw rs" style="left:1641px;top:473px;width:34px">否<svg class="a" style="right:5px;top:10px" width="11" height="8" viewBox="0 0 11 8"><path d="M1.2 1.5 L5.5 5.8 L9.8 1.5" fill="none" stroke="#000" stroke-width="2.1"/></svg></div>
<div class="a nw rl" style="left:1550px;top:517px;line-height:16px">字段记忆</div>
<div class="a nw rs" style="left:1641px;top:511px;width:34px">否<svg class="a" style="right:5px;top:10px" width="11" height="8" viewBox="0 0 11 8"><path d="M1.2 1.5 L5.5 5.8 L9.8 1.5" fill="none" stroke="#000" stroke-width="2.1"/></svg></div>
<div class="a nw rl" style="left:1550px;top:555px;line-height:16px">内容唯一</div>
<div class="a nw rs" style="left:1641px;top:549px;width:34px">否<svg class="a" style="right:5px;top:10px" width="11" height="8" viewBox="0 0 11 8"><path d="M1.2 1.5 L5.5 5.8 L9.8 1.5" fill="none" stroke="#000" stroke-width="2.1"/></svg></div>
<div class="a nw rl" style="left:1550px;top:593px;line-height:16px">lable隐藏</div>
<div class="a nw rs" style="left:1641px;top:587px;width:34px">否<svg class="a" style="right:5px;top:10px" width="11" height="8" viewBox="0 0 11 8"><path d="M1.2 1.5 L5.5 5.8 L9.8 1.5" fill="none" stroke="#000" stroke-width="2.1"/></svg></div>
<div class="a nw rl" style="left:1550px;top:631px;line-height:16px">帮助信息</div>
<div class="a nw ri" style="left:1641px;top:625px;width:154px"></div>
<div class="a nw rl" style="left:1550px;top:669px;line-height:16px">验证规则</div>
<div class="a nw ri" style="left:1641px;top:663px;width:156px"></div>
<div class="a nw" style="left:1804px;top:668px;font-size:15px;color:#f00;line-height:18px">配</div>
<div class="a nw rl" style="left:1550px;top:707px;line-height:16px">验证提示</div>
<div class="a nw ri" style="left:1641px;top:701px;width:154px"></div>
<div class="a nw rl" style="left:1550px;top:745px;line-height:16px">后缀内容</div>
<div class="a nw ri" style="left:1641px;top:739px;width:154px"></div>
<div class="a nw rl" style="left:1550px;top:783px;line-height:16px">默认内容</div>
<div class="a nw ri" style="left:1641px;top:777px;width:156px"></div>
<div class="a nw" style="left:1804px;top:782px;font-size:15px;color:#f00;line-height:18px">配</div>
<div class="a nw rl" style="left:1550px;top:821px;line-height:16px">占位内容</div>
<div class="a nw ri" style="left:1641px;top:815px;width:154px"></div>
<div class="a nw rl" style="left:1550px;top:859px;line-height:16px">规则引擎</div>
<div class="a nw ri" style="left:1641px;top:853px;width:156px"></div>
<div class="a nw" style="left:1804px;top:858px;font-size:15px;color:#f00;line-height:18px">配</div>
<svg class="a" style="left:0;top:0;pointer-events:none" width="1920" height="911"><text x="39" y="68" transform="rotate(-21 39 68)" font-family="Liberation Sans" font-size="16" fill="rgba(190,190,190,0.2)">Id:12026-01-19gadmin</text><text x="371" y="68" transform="rotate(-21 371 68)" font-family="Liberation Sans" font-size="16" fill="rgba(190,190,190,0.2)">Id:12026-01-19gadmin</text><text x="703" y="68" transform="rotate(-21 703 68)" font-family="Liberation Sans" font-size="16" fill="rgba(190,190,190,0.2)">Id:12026-01-19gadmin</text><text x="1035" y="68" transform="rotate(-21 1035 68)" font-family="Liberation Sans" font-size="16" fill="rgba(190,190,190,0.2)">Id:12026-01-19gadmin</text><text x="1367" y="68" transform="rotate(-21 1367 68)" font-family="Liberation Sans" font-size="16" fill="rgba(190,190,190,0.2)">Id:12026-01-19gadmin</text><text x="1699" y="68" transform="rotate(-21 1699 68)" font-family="Liberation Sans" font-size="16" fill="rgba(190,190,190,0.2)">Id:12026-01-19gadmin</text><text x="39" y="198" transform="rotate(-21 39 198)" font-family="Liberation Sans" font-size="16" fill="rgba(190,190,190,0.2)">Id:12026-01-19gadmin</text><text x="371" y="198" transform="rotate(-21 371 198)" font-family="Liberation Sans" font-size="16" fill="rgba(190,190,190,0.2)">Id:12026-01-19gadmin</text><text x="703" y="198" transform="rotate(-21 703 198)" font-family="Liberation Sans" font-size="16" fill="rgba(190,190,190,0.2)">Id:12026-01-19gadmin</text><text x="1035" y="198" transform="rotate(-21 1035 198)" font-family="Liberation Sans" font-size="16" fill="rgba(190,190,190,0.2)">Id:12026-01-19gadmin</text><text x="1367" y="198" transform="rotate(-21 1367 198)" font-family="Liberation Sans" font-size="16" fill="rgba(190,190,190,0.2)">Id:12026-01-19gadmin</text><text x="1699" y="198" transform="rotate(-21 1699 198)" font-family="Liberation Sans" font-size="16" fill="rgba(190,190,190,0.2)">Id:12026-01-19gadmin</text><text x="39" y="328" transform="rotate(-21 39 328)" font-family="Liberation Sans" font-size="16" fill="rgba(190,190,190,0.2)">Id:12026-01-19gadmin</text><text x="371" y="328" transform="rotate(-21 371 328)" font-family="Liberation Sans" font-size="16" fill="rgba(190,190,190,0.2)">Id:12026-01-19gadmin</text><text x="703" y="328" transform="rotate(-21 703 328)" font-family="Liberation Sans" font-size="16" fill="rgba(190,190,190,0.2)">Id:12026-01-19gadmin</text><text x="1035" y="328" transform="rotate(-21 1035 328)" font-family="Liberation Sans" font-size="16" fill="rgba(190,190,190,0.2)">Id:12026-01-19gadmin</text><text x="1367" y="328" transform="rotate(-21 1367 328)" font-family="Liberation Sans" font-size="16" fill="rgba(190,190,190,0.2)">Id:12026-01-19gadmin</text><text x="1699" y="328" transform="rotate(-21 1699 328)" font-family="Liberation Sans" font-size="16" fill="rgba(190,190,190,0.2)">Id:12026-01-19gadmin</text><text x="39" y="458" transform="rotate(-21 39 458)" font-family="Liberation Sans" font-size="16" fill="rgba(190,190,190,0.2)">Id:12026-01-19gadmin</text><text x="371" y="458" transform="rotate(-21 371 458)" font-family="Liberation Sans" font-size="16" fill="rgba(190,190,190,0.2)">Id:12026-01-19gadmin</text><text x="703" y="458" transform="rotate(-21 703 458)" font-family="Liberation Sans" font-size="16" fill="rgba(190,190,190,0.2)">Id:12026-01-19gadmin</text><text x="1035" y="458" transform="rotate(-21 1035 458)" font-family="Liberation Sans" font-size="16" fill="rgba(190,190,190,0.2)">Id:12026-01-19gadmin</text><text x="1367" y="458" transform="rotate(-21 1367 458)" font-family="Liberation Sans" font-size="16" fill="rgba(190,190,190,0.2)">Id:12026-01-19gadmin</text><text x="1699" y="458" transform="rotate(-21 1699 458)" font-family="Liberation Sans" font-size="16" fill="rgba(190,190,190,0.2)">Id:12026-01-19gadmin</text><text x="39" y="588" transform="rotate(-21 39 588)" font-family="Liberation Sans" font-size="16" fill="rgba(190,190,190,0.2)">Id:12026-01-19gadmin</text><text x="371" y="588" transform="rotate(-21 371 588)" font-family="Liberation Sans" font-size="16" fill="rgba(190,190,190,0.2)">Id:12026-01-19gadmin</text><text x="703" y="588" transform="rotate(-21 703 588)" font-family="Liberation Sans" font-size="16" fill="rgba(190,190,190,0.2)">Id:12026-01-19gadmin</text><text x="1035" y="588" transform="rotate(-21 1035 588)" font-family="Liberation Sans" font-size="16" fill="rgba(190,190,190,0.2)">Id:12026-01-19gadmin</text><text x="1367" y="588" transform="rotate(-21 1367 588)" font-family="Liberation Sans" font-size="16" fill="rgba(190,190,190,0.2)">Id:12026-01-19gadmin</text><text x="1699" y="588" transform="rotate(-21 1699 588)" font-family="Liberation Sans" font-size="16" fill="rgba(190,190,190,0.2)">Id:12026-01-19gadmin</text></svg>
</body></html>
